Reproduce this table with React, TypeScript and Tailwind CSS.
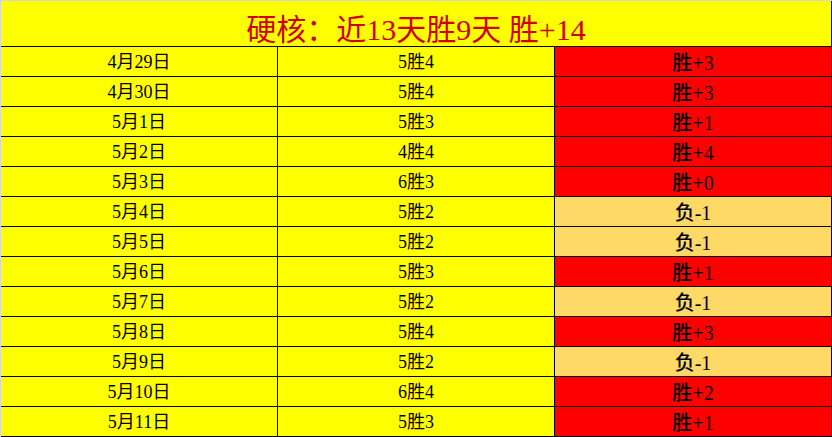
const rows: { date: string; score: string; result: string; win: boolean }[] = [
  { date: '4月29日', score: '5胜4', result: '胜+3', win: true },
  { date: '4月30日', score: '5胜4', result: '胜+3', win: true },
  { date: '5月1日', score: '5胜3', result: '胜+1', win: true },
  { date: '5月2日', score: '4胜4', result: '胜+4', win: true },
  { date: '5月3日', score: '6胜3', result: '胜+0', win: true },
  { date: '5月4日', score: '5胜2', result: '负-1', win: false },
  { date: '5月5日', score: '5胜2', result: '负-1', win: false },
  { date: '5月6日', score: '5胜3', result: '胜+1', win: true },
  { date: '5月7日', score: '5胜2', result: '负-1', win: false },
  { date: '5月8日', score: '5胜4', result: '胜+3', win: true },
  { date: '5月9日', score: '5胜2', result: '负-1', win: false },
  { date: '5月10日', score: '6胜4', result: '胜+2', win: true },
  { date: '5月11日', score: '5胜3', result: '胜+1', win: true },
];

export default function App() {
  return (
    <div
      className="w-[832px] h-[437px] bg-[#ffff00] border-t border-l border-[#d6d6d6] overflow-hidden"
      style={{ fontFamily: '"Liberation Serif", "Noto Sans CJK SC", serif' }}
    >
      <div className="border-r border-black">
        {/* Title */}
        <div className="h-[46px] border-b border-black flex items-end justify-center pb-[1px]">
          <span className="text-[30px] leading-none text-[#d00000] whitespace-pre">硬核：近13天胜9天 胜+14</span>
        </div>

        {/* Rows */}
        {rows.map((r, i) => (
          <div key={i} className="flex h-[30px] border-b border-black">
            <div className="w-[277px] border-r border-black flex items-center justify-center pt-[2px] text-[18px] text-black">
              {r.date}
            </div>
            <div className="w-[277px] border-r border-black flex items-center justify-center pt-[2px] text-[18px] text-black">
              {r.score}
            </div>
            <div
              className={`flex-1 flex items-center justify-center text-[20px] font-medium text-black pt-[3px] ${
                r.win ? 'bg-[#ff0000]' : 'bg-[#ffd966]'
              }`}
            >
              {r.result}
            </div>
          </div>
        ))}
      </div>
    </div>
  );
}
